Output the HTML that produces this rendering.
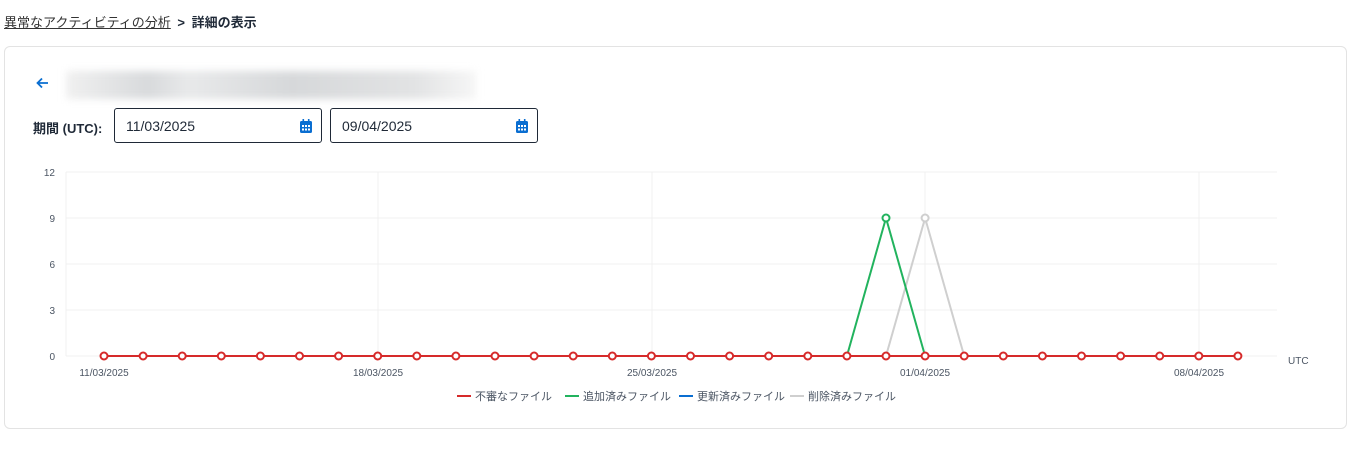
<!DOCTYPE html>
<html><head><meta charset="utf-8"><style>
body{margin:0;width:1362px;height:461px;background:#fff;font-family:"Liberation Sans","Noto Sans CJK JP",sans-serif;color:#1f2937;position:relative;overflow:hidden}
.bc{position:absolute;left:4px;top:12px;font-size:13px}
.bc u{color:#333}
.card{position:absolute;left:4px;top:46px;width:1343px;height:383px;border:1px solid #e3e3e3;border-radius:6px;box-sizing:border-box}
.blur{position:absolute;left:66px;top:71px;width:410px;height:28px;background:linear-gradient(90deg,#f0f0f0,#d8dadc 20%,#e8e9ea 30%,#d6d8da 55%,#e2e3e4 85%,#f6f6f6);filter:blur(4px)}
.lab{position:absolute;left:33px;top:118px;font-size:13px;font-weight:bold}
.in{position:absolute;top:108px;width:208px;height:35px;border:1px solid #1f2937;border-radius:3px;box-sizing:border-box;font-size:14px;padding:9px 0 0 11px}
.ic{position:absolute;right:9px;top:10px}
</style></head><body>
<div class="bc"><u>異常なアクティビティの分析</u> <span style="margin:0 3px;font-weight:bold">&gt;</span> <b>詳細の表示</b></div>
<div class="card"></div>
<svg style="position:absolute;left:36px;top:76px" width="14" height="14" viewBox="0 0 14 14"><path d="M12 7H2M6 2.5L1.5 7 6 11.5" stroke="#0a6ed1" stroke-width="1.8" fill="none"/></svg>
<div class="blur"></div>
<div class="lab">期間 (UTC):</div>
<div class="in" style="left:114px">11/03/2025<svg class="ic" width="12" height="14" viewBox="0 0 12 14"><rect x="0" y="2" width="12" height="12" rx="1.5" fill="#0a6ed1"/><rect x="2.5" y="0" width="1.6" height="3" fill="#0a6ed1"/><rect x="7.9" y="0" width="1.6" height="3" fill="#0a6ed1"/><g fill="#fff"><rect x="2" y="6" width="2" height="2"/><rect x="5" y="6" width="2" height="2"/><rect x="8" y="6" width="2" height="2"/><rect x="2" y="9.5" width="2" height="2"/><rect x="5" y="9.5" width="2" height="2"/><rect x="8" y="9.5" width="2" height="2"/></g></svg></div>
<div class="in" style="left:330px">09/04/2025<svg class="ic" width="12" height="14" viewBox="0 0 12 14"><rect x="0" y="2" width="12" height="12" rx="1.5" fill="#0a6ed1"/><rect x="2.5" y="0" width="1.6" height="3" fill="#0a6ed1"/><rect x="7.9" y="0" width="1.6" height="3" fill="#0a6ed1"/><g fill="#fff"><rect x="2" y="6" width="2" height="2"/><rect x="5" y="6" width="2" height="2"/><rect x="8" y="6" width="2" height="2"/><rect x="2" y="9.5" width="2" height="2"/><rect x="5" y="9.5" width="2" height="2"/><rect x="8" y="9.5" width="2" height="2"/></g></svg></div>
<svg id="c" style="position:absolute;left:0;top:0" width="1362" height="461" font-family="Liberation Sans, sans-serif" font-size="10" fill="#4b5563"></svg>
<script>
var s='';
[[172,'12'],[218,'9'],[264,'6'],[310,'3'],[356,'0']].forEach(function(a){s+='<line x1="66" x2="1277" y1="'+a[0]+'" y2="'+a[0]+'" stroke="#f0f0f0"/><text x="55" y="'+(a[0]+4)+'" text-anchor="end">'+a[1]+'</text>';});
[66,378,652,925,1199].forEach(function(x){s+='<line x1="'+x+'" x2="'+x+'" y1="172" y2="356" stroke="#f0f0f0"/>';});
[[104,'11/03/2025'],[378,'18/03/2025'],[652,'25/03/2025'],[925,'01/04/2025'],[1199,'08/04/2025']].forEach(function(a){s+='<text x="'+a[0]+'" y="376" text-anchor="middle">'+a[1]+'</text>';});
s+='<text x="1288" y="364">UTC</text>';
function X(i){return 104+i*39.1}
s+='<polyline points="'+X(20)+',356 '+X(21)+',218 '+X(22)+',356" stroke="#cfcfcf" stroke-width="2" fill="none"/>';
s+='<polyline points="'+X(19)+',356 '+X(20)+',218 '+X(21)+',356" stroke="#22b35e" stroke-width="2" fill="none"/>';
s+='<circle cx="'+X(21)+'" cy="218" r="3.5" fill="#fff" stroke="#cfcfcf" stroke-width="2"/><circle cx="'+X(20)+'" cy="218" r="3.5" fill="#fff" stroke="#22b35e" stroke-width="2"/>';
s+='<line x1="'+X(0)+'" x2="'+X(29)+'" y1="356" y2="356" stroke="#d62a2a" stroke-width="2"/>';
for(var i=0;i<30;i++)s+='<circle cx="'+X(i)+'" cy="356" r="3.5" fill="#fff" stroke="#d62a2a" stroke-width="2"/>';
var L=[[457,'#d62a2a','不審なファイル'],[565,'#22b35e','追加済みファイル'],[679,'#0a6ed1','更新済みファイル'],[790,'#cfcfcf','削除済みファイル']];
L.forEach(function(a){s+='<line x1="'+a[0]+'" x2="'+(a[0]+14)+'" y1="396" y2="396" stroke="'+a[1]+'" stroke-width="2"/><text x="'+(a[0]+18)+'" y="400" font-size="11" font-family="Liberation Sans, Noto Sans CJK JP, sans-serif">'+a[2]+'</text>';});
document.getElementById('c').innerHTML=s;
</script>
</body></html>
